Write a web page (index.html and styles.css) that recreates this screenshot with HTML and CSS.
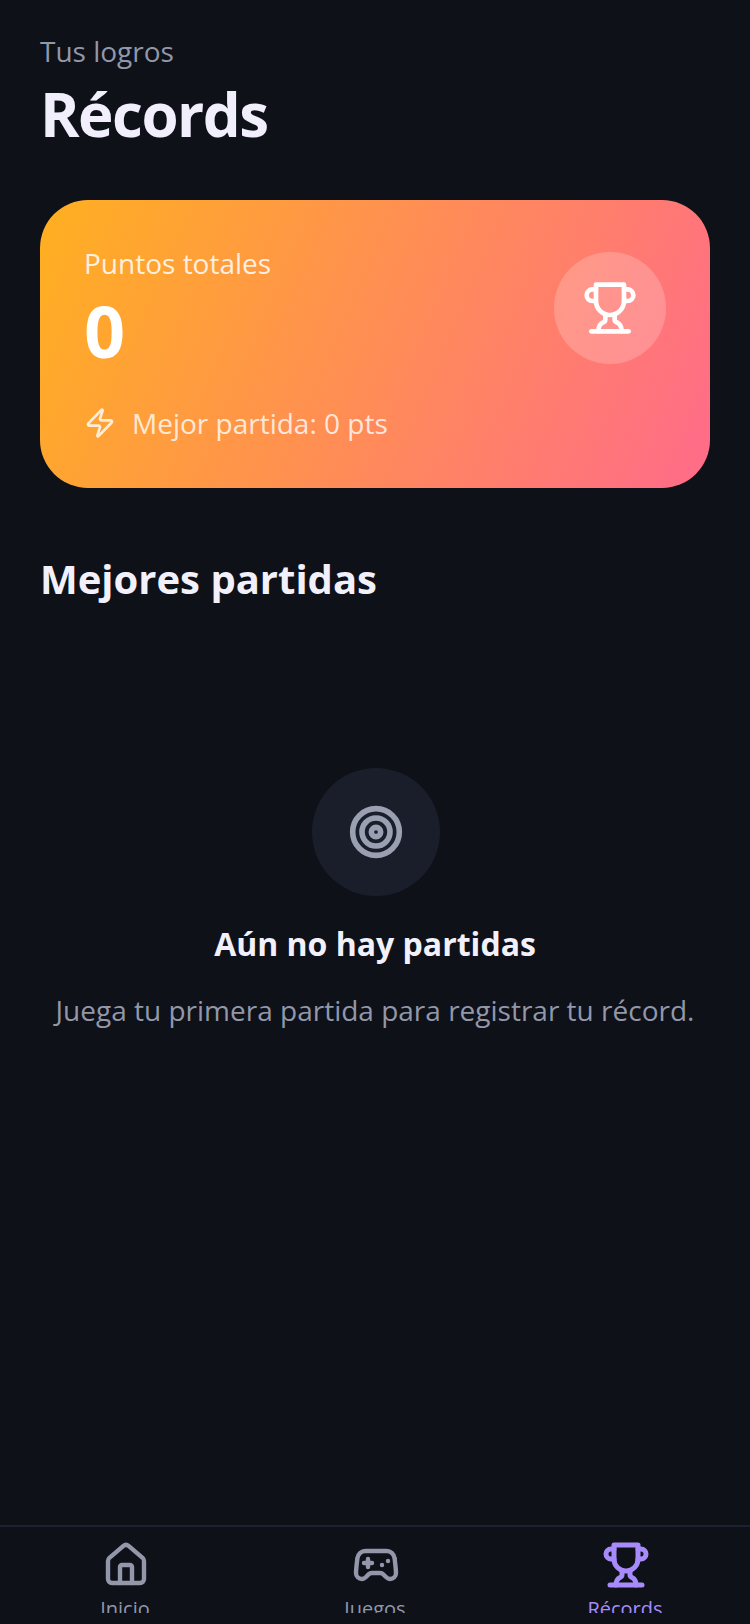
FILE: index.html
```html
<!DOCTYPE html>
<html lang="es">
<head>
  <meta charset="UTF-8">
  <meta name="viewport" content="width=device-width, initial-scale=1.0">
  <title>Récords</title>
  <link rel="stylesheet" href="styles.css">
</head>
<body>
  <main class="content">
    <header class="page-head">
      <p class="page-sub">Tus logros</p>
      <h1 class="page-title">Récords</h1>
    </header>

    <section class="score-card">
      <div class="score-top">
        <div>
          <p class="score-label">Puntos totales</p>
          <p class="score-value">0</p>
        </div>
        <div class="score-badge">
          <svg width="56" height="56" viewBox="0 0 24 24" fill="none" stroke="#fff" stroke-width="2" stroke-linecap="round" stroke-linejoin="round">
            <path d="M6 9H4.5a2.5 2.5 0 0 1 0-5H6"/>
            <path d="M18 9h1.5a2.5 2.5 0 0 0 0-5H18"/>
            <path d="M4 22h16"/>
            <path d="M10 14.66V17c0 .55-.47.98-.97 1.21C7.85 18.75 7 20.24 7 22"/>
            <path d="M14 14.66V17c0 .55.47.98.97 1.21C16.15 18.75 17 20.24 17 22"/>
            <path d="M18 2H6v7a6 6 0 0 0 12 0V2Z"/>
          </svg>
        </div>
      </div>
      <div class="score-best">
        <svg width="32" height="32" viewBox="0 0 24 24" fill="none" stroke="currentColor" stroke-width="2" stroke-linecap="round" stroke-linejoin="round">
          <path d="M4 14a1 1 0 0 1-.78-1.63l9.9-10.2a.5.5 0 0 1 .86.46l-1.92 6.02A1 1 0 0 0 13 10h7a1 1 0 0 1 .78 1.63l-9.9 10.2a.5.5 0 0 1-.86-.46l1.92-6.02A1 1 0 0 0 11 14z"/>
        </svg>
        <span>Mejor partida: 0 pts</span>
      </div>
    </section>

    <h2 class="section-title">Mejores partidas</h2>

    <section class="empty">
      <div class="empty-icon">
        <svg width="56" height="56" viewBox="0 0 24 24" fill="none" stroke="#9a9fb2" stroke-width="2.4" stroke-linecap="round" stroke-linejoin="round">
          <circle cx="12" cy="12" r="10"/>
          <circle cx="12" cy="12" r="6"/>
          <circle cx="12" cy="12" r="2"/>
        </svg>
      </div>
      <h3 class="empty-title">Aún no hay partidas</h3>
      <p class="empty-text">Juega tu primera partida para registrar tu récord.</p>
    </section>
  </main>

  <nav class="tabbar">
    <div class="tab">
      <svg width="48" height="48" viewBox="0 0 24 24" fill="none" stroke="currentColor" stroke-width="2.2" stroke-linecap="round" stroke-linejoin="round">
        <path d="M15 21v-8a1 1 0 0 0-1-1h-4a1 1 0 0 0-1 1v8"/>
        <path d="M3 10a2 2 0 0 1 .71-1.53l7-6a2 2 0 0 1 2.58 0l7 6A2 2 0 0 1 21 10v9a2 2 0 0 1-2 2H5a2 2 0 0 1-2-2z"/>
      </svg>
      <span>Inicio</span>
    </div>
    <div class="tab">
      <svg width="48" height="48" viewBox="0 0 24 24" fill="none" stroke="currentColor" stroke-width="2.2" stroke-linecap="round" stroke-linejoin="round">
        <path d="M6 11h4M8 9v4M15 12h.01M18 10h.01"/>
        <path d="M17.32 5H6.68a4 4 0 0 0-3.98 3.59c-.01.05-.01.1-.02.15C2.6 9.42 2 14.46 2 16a3 3 0 0 0 3 3c1 0 1.5-.5 2-1l1.41-1.41A2 2 0 0 1 9.83 16h4.34a2 2 0 0 1 1.41.59L17 18c.5.5 1 1 2 1a3 3 0 0 0 3-3c0-1.55-.6-6.58-.68-7.26 0-.05-.01-.1-.02-.15A4 4 0 0 0 17.32 5z"/>
      </svg>
      <span>Juegos</span>
    </div>
    <div class="tab tab-active">
      <svg width="48" height="48" viewBox="0 0 24 24" fill="none" stroke="currentColor" stroke-width="2.5" stroke-linecap="round" stroke-linejoin="round">
        <path d="M6 9H4.5a2.5 2.5 0 0 1 0-5H6"/>
        <path d="M18 9h1.5a2.5 2.5 0 0 0 0-5H18"/>
        <path d="M4 22h16"/>
        <path d="M10 14.66V17c0 .55-.47.98-.97 1.21C7.85 18.75 7 20.24 7 22"/>
        <path d="M14 14.66V17c0 .55.47.98.97 1.21C16.15 18.75 17 20.24 17 22"/>
        <path d="M18 2H6v7a6 6 0 0 0 12 0V2Z"/>
      </svg>
      <span>Récords</span>
    </div>
  </nav>
</body>
</html>
```

FILE: styles.css
```css
* {
  box-sizing: border-box;
}
body {
  margin: 0;
  height: 1624px;
  padding-bottom: 11px;
  display: flex;
  flex-direction: column;
  overflow: hidden;
  background-color: #0e1118;
  font-family: "Open Sans", sans-serif;
  color: #f2f1fb;
}
p, h1, h2, h3 {
  margin: 0;
}
.content {
  flex: 1;
  padding: 31px 40px 0;
}
.page-sub {
  font-size: 28px;
  line-height: 40px;
  color: #9297aa;
}
.page-title {
  margin-top: 5px;
  font-size: 60px;
  line-height: 76px;
  font-weight: 700;
  letter-spacing: -1.5px;
  color: #f0effb;
}
.score-card {
  margin-top: 48px;
  height: 288px;
  padding: 45px 44px 0;
  border-radius: 48px;
  background: linear-gradient(113.3deg, #ffb020 0%, #ff6b8a 100%);
  color: #fff;
}
.score-top {
  display: flex;
  justify-content: space-between;
  align-items: flex-start;
}
.score-label {
  font-size: 28px;
  line-height: 36px;
  color: rgba(255,255,255,0.85);
}
.score-value {
  margin-top: 5px;
  font-size: 72px;
  line-height: 88px;
  font-weight: 700;
}
.score-badge {
  width: 112px;
  height: 112px;
  margin-top: 7px;
  border-radius: 50%;
  background-color: rgba(255,255,255,0.2);
  display: flex;
  align-items: center;
  justify-content: center;
}
.score-best {
  margin-top: 29px;
  display: flex;
  align-items: center;
  gap: 16px;
  font-size: 28px;
  line-height: 40px;
  color: rgba(255,255,255,0.8);
}
.section-title {
  margin-top: 63px;
  font-size: 40px;
  line-height: 56px;
  font-weight: 700;
}
.empty {
  margin-top: 161px;
  display: flex;
  flex-direction: column;
  align-items: center;
  text-align: center;
}
.empty-icon {
  width: 128px;
  height: 128px;
  margin-left: 2px;
  border-radius: 50%;
  background-color: #1a1e2b;
  display: flex;
  align-items: center;
  justify-content: center;
}
.empty-title {
  margin-top: 24px;
  font-size: 32px;
  line-height: 48px;
  font-weight: 700;
}
.empty-text {
  margin-top: 22px;
  font-size: 28px;
  line-height: 40px;
  white-space: nowrap;
  color: #9297aa;
}
.tabbar {
  height: 88px;
  flex: none;
  display: flex;
  overflow: hidden;
  border-top: 2px solid #1d2130;
}
.tab {
  flex: 1;
  padding-top: 14px;
  display: flex;
  flex-direction: column;
  align-items: center;
  gap: 5px;
  font-size: 20px;
  line-height: 30px;
  color: #9297aa;
}
.tab svg {
  flex: none;
  margin-left: 1px;
}
.tab-active {
  color: #a78bfa;
}
```
